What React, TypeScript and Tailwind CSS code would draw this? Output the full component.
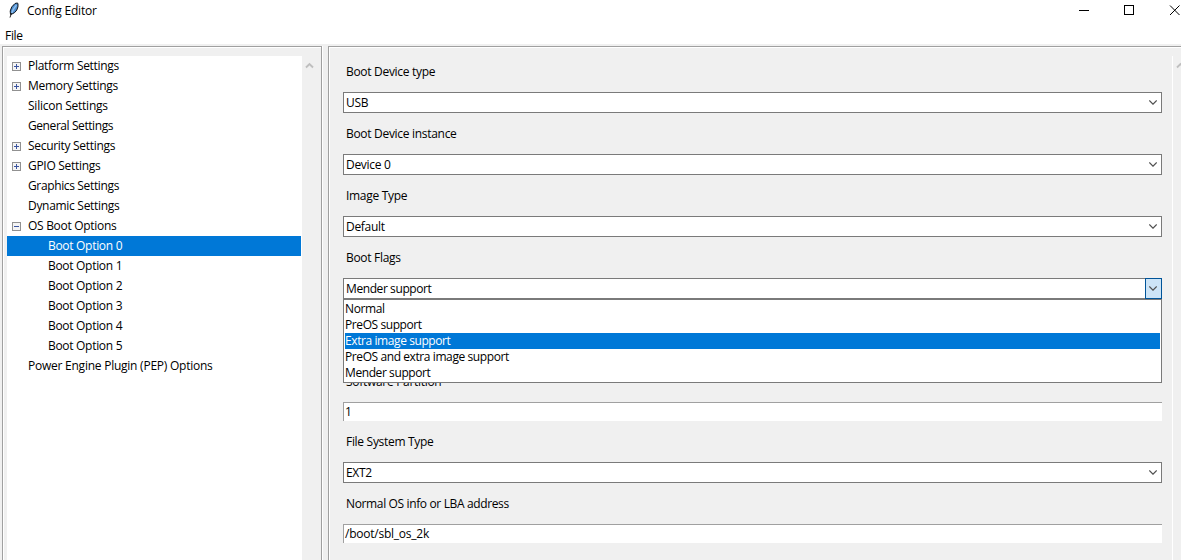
import React from "react";

const baseText = "whitespace-nowrap text-[12px] leading-[17px]";
const textClass = `${baseText} tracking-[-0.3px]`;
const tightText = `${baseText} tracking-[-0.41px]`;
const wideText = `${baseText} tracking-[-0.24px]`;

type Node = { label: string; toggle?: "plus" | "minus"; child?: boolean; selected?: boolean; text?: string };

const nodes: Node[] = [
  { label: "Platform Settings", toggle: "plus" },
  { label: "Memory Settings", toggle: "plus" },
  { label: "Silicon Settings", text: wideText },
  { label: "General Settings", text: `${baseText} tracking-[-0.42px]` },
  { label: "Security Settings", toggle: "plus" },
  { label: "GPIO Settings", toggle: "plus" },
  { label: "Graphics Settings", text: `${baseText} tracking-[-0.36px]` },
  { label: "Dynamic Settings" },
  { label: "OS Boot Options", toggle: "minus" },
  { label: "Boot Option 0", child: true, selected: true },
  { label: "Boot Option 1", child: true },
  { label: "Boot Option 2", child: true },
  { label: "Boot Option 3", child: true },
  { label: "Boot Option 4", child: true },
  { label: "Boot Option 5", child: true },
  { label: "Power Engine Plugin (PEP) Options", text: wideText },
];

const flags = ["Normal", "PreOS support", "Extra image support", "PreOS and extra image support", "Mender support"];

function Feather() {
  return (
    <svg width="16" height="16" viewBox="0 0 16 16">
      <path d="M4.500 12.500 L4.200 9 Q5 4.500 9 1.500 Q11.700 .5 12 1.500 Q12.500 5 10.800 8 Q9 11 6 12Z" fill="#4f8fd0" stroke="#10151c" strokeWidth="1" />
      <path d="M10.500 3 Q7 7 5.800 11" stroke="#8fc0f0" strokeWidth="1.300" fill="none" />
      <path d="M5.500 11 L4 15.500" stroke="#222" strokeWidth="1" />
    </svg>
  );
}

function Toggle({ kind }: { kind: "plus" | "minus" }) {
  return (
    <svg width="9" height="9" viewBox="0 0 9 9" shapeRendering="crispEdges">
      <rect width="9" height="9" fill="#919191" />
      <rect x="1" y="1" width="7" height="7" fill="#f4f4f4" />
      <rect x="2" y="4" width="5" height="1" fill="#3c559f" />
      {kind === "plus" && <rect x="4" y="2" width="1" height="5" fill="#3c559f" />}
    </svg>
  );
}

function Chevron() {
  return (
    <svg width="8" height="5" viewBox="0 0 8 5" fill="none">
      <path d="M.3 .5 L4 4.200 L7.700 .5" stroke="#505050" strokeWidth="1.200" />
    </svg>
  );
}

function ScrollUp() {
  return (
    <svg width="9" height="7" viewBox="0 0 9 7" fill="none" className="shrink-0">
      <path d="M1 5.500 L4.500 2 L8 5.500" stroke="#bfbfbf" strokeWidth="1.900" />
    </svg>
  );
}

function Field({ label, children }: { label: string; children: React.ReactNode }) {
  return (
    <div className="mb-[11px]">
      <div className="flex h-5 items-start pl-[3px] pt-px">
        <span className={label.startsWith("Normal") ? `${baseText} tracking-[-0.36px]` : textClass}>{label}</span>
      </div>
      <div className="mt-2.5">{children}</div>
    </div>
  );
}

function Combo({ value, open }: { value: string; open?: boolean }) {
  return (
    <div className="relative">
      <div className="flex h-[21px] items-center justify-between border border-[#7a7a7a] bg-white pl-0.5">
        <span className={open ? tightText : textClass}>{value}</span>
        {open ? (
          <span className="-my-px -mr-px flex h-[21px] w-[17px] items-center justify-center border border-[#005499] bg-[#cce4f7] pr-px">
            <Chevron />
          </span>
        ) : (
          <span className="flex w-4 items-center justify-center">
            <Chevron />
          </span>
        )}
      </div>
      {open && (
        <div className="absolute left-0 top-[21px] z-10 h-[84px] w-full border border-[#7a7a7a] bg-white p-px">
          {flags.map((f) => (
            <div
              key={f}
              className={`flex h-4 items-start ${f === "Extra image support" ? "bg-[#0078d7] text-white" : ""}`}
            >
              <span className={`-mt-px ${tightText}`}>{f}</span>
            </div>
          ))}
        </div>
      )}
    </div>
  );
}

function Entry({ value }: { value: string }) {
  return (
    <div className="flex h-[19px] items-start border-l border-t border-[#a0a0a0] bg-white pl-px">
      <span className={value.length > 1 ? wideText : textClass}>{value}</span>
    </div>
  );
}

export default function App() {
  return (
    <div className="flex h-[560px] w-[1181px] flex-col overflow-hidden bg-white font-['Open_Sans',sans-serif] text-black">
      <header className="flex h-[22px] shrink-0 items-start">
        <div className="flex w-[27px] justify-center pt-0.5">
          <Feather />
        </div>
        <span className={`mt-0.5 ${baseText} tracking-[-0.2px]`}>Config Editor</span>
        <svg className="ml-auto shrink-0" width="104" height="22" viewBox="0 0 104 22" fill="none" stroke="#000">
          <path d="M2 10.500H12" />
          <rect x="47.500" y="5.500" width="9" height="9" />
          <path d="M93 5.500 L102.500 15 M102.500 5.500 L93 15" />
        </svg>
      </header>
      <nav className="flex h-[22px] shrink-0 items-start pl-[5px] pt-[5px]">
        <span className={textClass}>File</span>
      </nav>
      <main className="flex h-[516px] bg-[#f0f0f0] pl-0.5 pt-0.5">
        <section className="flex h-[600px] w-[320px] shrink-0 border border-[#a0a0a0] shadow-[inset_1px_1px_0_#fff,1px_0_0_#fff]">
          <div className="ml-1 mt-[9px] w-[295px] bg-white">
            {nodes.map((n) => (
              <div key={n.label} className={`mr-px flex h-5 items-start pt-px ${n.selected ? "bg-[#0078d7] text-white" : ""}`}>
                <span className={`flex shrink-0 pl-[5px] pt-[5px] ${n.child ? "w-[41px]" : "w-[21px]"}`}>
                  {n.toggle && <Toggle kind={n.toggle} />}
                </span>
                <span className={n.text ?? textClass}>{n.label}</span>
              </div>
            ))}
          </div>
          <div className="ml-[3px] mt-[15px]">
            <ScrollUp />
          </div>
        </section>
        <section className="ml-1.5 flex h-[600px] w-[860px] shrink-0 border border-[#a0a0a0] shadow-[inset_1px_1px_0_#fff]">
          <div className="mt-[9px] w-[844px] shrink-0 border-r border-white pl-3.5 pr-2.5 pt-1.5">
            <Field label="Boot Device type"><Combo value="USB" /></Field>
            <Field label="Boot Device instance"><Combo value="Device 0" /></Field>
            <Field label="Image Type"><Combo value="Default" /></Field>
            <Field label="Boot Flags"><Combo value="Mender support" open /></Field>
            <div className="h-[62px]" />
            <Field label="Software Partition"><Entry value="1" /></Field>
            <Field label="File System Type"><Combo value="EXT2" /></Field>
            <Field label="Normal OS info or LBA address"><Entry value="/boot/sbl_os_2k" /></Field>
          </div>
          <div className="ml-[3px] mt-[15px]"><ScrollUp /></div>
        </section>
      </main>
    </div>
  );
}
